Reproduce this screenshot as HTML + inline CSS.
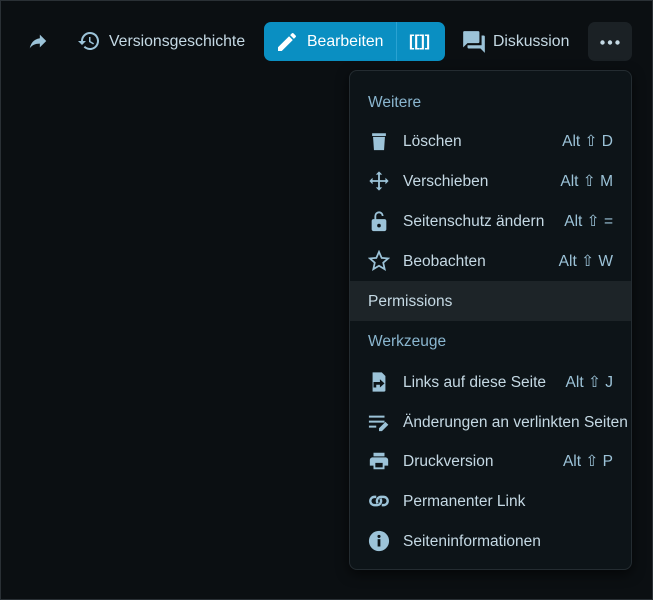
<!DOCTYPE html>
<html><head><meta charset="utf-8"><style>
body{margin:0;width:653px;height:600px;background:#0b0f12;font-family:"Liberation Sans",sans-serif;position:relative;overflow:hidden;color:#c5d9e4}
.frame{position:absolute;inset:0;border:1px solid #2a3035;box-sizing:border-box}
.a{position:absolute;font-size:15.8px;line-height:18px}
svg{position:absolute}
.btn{position:absolute;left:264px;top:22px;width:181px;height:39px;background:#0a8fc2;border-radius:7px;color:#fff}
.more{position:absolute;left:588px;top:22px;width:44px;height:39px;background:#1b2125;border-radius:7px}
.menu{position:absolute;left:349px;top:70px;width:283px;height:500px;background:#0d1418;border:1px solid #242c31;border-radius:8px;box-sizing:border-box;box-shadow:0 4px 12px rgba(0,0,0,.6)}
.row{position:absolute;left:0;width:281px;height:40px}
.row .t{position:absolute;left:53px;top:12px;font-size:15.5px;line-height:18px;color:#c5d9e4;white-space:nowrap}
.row .k{position:absolute;right:18px;top:12px;font-size:15.5px;line-height:18px;color:#9cc3d8}
.row svg{left:18px;top:9px}
.h{position:absolute;left:18px;font-size:15.5px;color:#8ab6cf}
</style></head><body>
<div class="frame"></div>
<svg style="left:27px;top:30px" width="22" height="22" viewBox="0 0 24 24"><path fill="#9cc3d8" d="M14 5v4C7 10 4 15 3 20c2.5-3.5 6-5.1 11-5.1V19l7-7z"/></svg>
<svg style="left:77px;top:29px" width="24" height="24" viewBox="0 0 24 24"><path fill="#9cc3d8" d="M13 3a9 9 0 0 0-9 9H1l4 4 4-4H6a7 7 0 1 1 2.05 4.95L6.64 18.36A9 9 0 1 0 13 3zm-1 5v5l4.25 2.52.77-1.28-3.52-2.09V8z"/></svg>
<div class="a" style="left:109px;top:33px;color:#c5d9e4">Versionsgeschichte</div>
<div class="btn">
<svg style="left:11px;top:8px" width="24" height="24" viewBox="0 0 24 24"><path fill="#fff" d="M3 17.25V21h3.75L17.81 9.94l-3.75-3.75zM20.71 7.04a1 1 0 0 0 0-1.41l-2.34-2.34a1 1 0 0 0-1.41 0l-1.83 1.83 3.75 3.75z"/></svg>
<div class="a" style="left:43px;top:11px;color:#fff">Bearbeiten</div>
<div style="position:absolute;left:132px;top:0;width:1px;height:39px;background:#2aa2d2"></div>
<div class="a" style="left:145px;top:11px;color:#fff;font-weight:bold">[[]]</div>
</div>
<svg style="left:461px;top:29px" width="26" height="26" viewBox="0 0 24 24"><path fill="#9cc3d8" d="M21 6h-2v9H6v2c0 .55.45 1 1 1h11l4 4V7c0-.55-.45-1-1-1zm-4 6V3c0-.55-.45-1-1-1H3c-.55 0-1 .45-1 1v14l4-4h10c.55 0 1-.45 1-1z"/></svg>
<div class="a" style="left:493px;top:33px">Diskussion</div>
<div class="more"><svg style="left:12px;top:18px" width="20" height="5"><circle cx="2.5" cy="2.5" r="2.2" fill="#c5d9e4"/><circle cx="10" cy="2.5" r="2.2" fill="#c5d9e4"/><circle cx="17.5" cy="2.5" r="2.2" fill="#c5d9e4"/></svg></div>

<div class="menu">
<div class="h" style="top:23px">Weitere</div>
<div class="row" style="top:50px"><svg width="22" height="22" viewBox="0 0 24 24"><path fill="#9cc3d8" d="M5.5 7.5h13l-1 14.5h-11zM4.5 3.5h15v3h-15z"/></svg><span class="t">Löschen</span><span class="k">Alt ⇧ D</span></div>
<div class="row" style="top:90px"><svg width="22" height="22" viewBox="0 0 24 24"><path fill="#9cc3d8" d="M12 1.5l3.5 3.5h-2.5v6h6V8.5l3.5 3.5-3.5 3.5V13h-6v6h2.5L12 22.5 8.5 19H11v-6H5v2.5L1.5 12 5 8.5V11h6V5H8.5z"/></svg><span class="t">Verschieben</span><span class="k">Alt ⇧ M</span></div>
<div class="row" style="top:130px"><svg width="22" height="22" viewBox="0 0 24 24"><path fill="#9cc3d8" d="M18 10H9V6.5a3 3 0 0 1 6 0h2a5 5 0 0 0-10 0V10H6c-1.1 0-2 .9-2 2v9c0 1.1.9 2 2 2h12c1.1 0 2-.9 2-2v-9c0-1.1-.9-2-2-2zm-6 9a2 2 0 1 1 0-4 2 2 0 0 1 0 4z"/></svg><span class="t">Seitenschutz ändern</span><span class="k">Alt ⇧ =</span></div>
<div class="row" style="top:170px"><svg width="22" height="22" viewBox="0 0 24 24"><path fill="none" stroke="#9cc3d8" stroke-width="1.9" d="M12 2l2.9 6.6 7.1.6-5.4 4.7 1.6 7L12 17.2l-6.2 3.7 1.6-7L2 9.2l7.1-.6z"/></svg><span class="t">Beobachten</span><span class="k">Alt ⇧ W</span></div>
<div class="row" style="top:210px;background:#1d2428"><span class="t" style="left:18px">Permissions</span></div>
<div class="h" style="top:262px">Werkzeuge</div>
<div class="row" style="top:291px"><svg width="22" height="22" viewBox="0 0 24 24"><path fill="#9cc3d8" d="M5 1.5h10l4 4V21a1.5 1.5 0 0 1-1.5 1.5H5z"/><path fill="#0d1418" d="M6 12h7V9l5 4.5-5 4.5v-3H9v3H6z"/></svg><span class="t">Links auf diese Seite</span><span class="k">Alt ⇧ J</span></div>
<div class="row" style="top:331px"><svg width="22" height="22" viewBox="0 0 24 24"><path fill="#9cc3d8" d="M1 5h17v2.2H1zm0 5.5h17v2.2H1zm0 5.5h8v2.2H1zm11 6v-3.2l7-7 3.2 3.2-7 7z"/></svg><span class="t">Änderungen an verlinkten Seiten</span></div>
<div class="row" style="top:370px"><svg width="22" height="22" viewBox="0 0 24 24"><path fill="#9cc3d8" d="M19 8H5c-1.66 0-3 1.34-3 3v6h4v4h12v-4h4v-6c0-1.66-1.34-3-3-3zm-3 11H8v-5h8zM18 3H6v4h12z"/></svg><span class="t">Druckversion</span><span class="k">Alt ⇧ P</span></div>
<div class="row" style="top:410px"><svg width="22" height="22" viewBox="0 0 24 24"><path fill="none" stroke="#9cc3d8" stroke-width="2.6" d="M9 7.5H7a4.5 4.5 0 0 0 0 9h3a4.5 4.5 0 0 0 3.5-7M15 16.5h2a4.5 4.5 0 0 0 0-9h-3a4.5 4.5 0 0 0-3.5 7"/></svg><span class="t">Permanenter Link</span></div>
<div class="row" style="top:450px"><svg width="22" height="22" viewBox="0 0 24 24"><circle cx="12" cy="12" r="11" fill="#9cc3d8"/><rect x="10.5" y="10" width="3" height="8" fill="#0d1418"/><circle cx="12" cy="7" r="1.7" fill="#0d1418"/></svg><span class="t">Seiteninformationen</span></div>
</div>
</body></html>
